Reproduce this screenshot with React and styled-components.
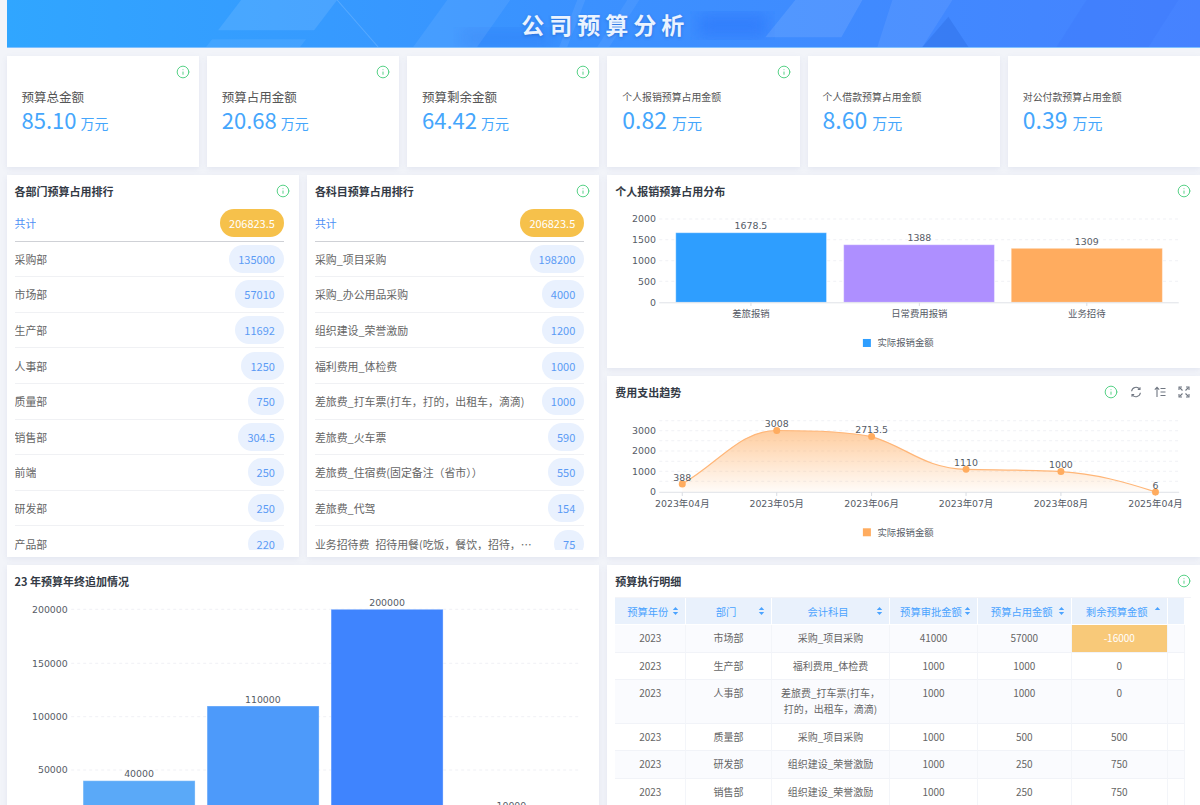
import React from "react";
import styled, { createGlobalStyle } from "styled-components";
import { Info } from "lucide-react";

const GlobalStyle = createGlobalStyle`
  html, body {
    margin: 0;
    height: 805px;
    overflow: hidden;
    background: #f2f4f9;
    font-family: "Noto Sans CJK SC", "Noto Sans", sans-serif;
  }
`;

const Page = styled.div`
  width: 1200px;
  height: 805px;
  overflow: hidden;
  box-sizing: border-box;
  padding-left: 6.5px;
`;

const Banner = styled.header`
  position: relative;
  height: 48px;
  box-sizing: border-box;
  border-bottom: 1px solid #7fc0ff;
  background: linear-gradient(90deg, #30a6ff 0%, #3a92ff 45%, #4682ff 100%);
  display: flex;
  align-items: center;
  justify-content: center;
  overflow: hidden;
`;

const BannerArt = styled.svg`
  position: absolute;
  inset: 0;
  width: 100%;
  height: 100%;
`;

const BannerTitle = styled.h1`
  position: relative;
  margin: 0 0 0 4px;
  font-size: 23px;
  line-height: 48px;
  font-weight: 700;
  letter-spacing: 5px;
  color: #eaf3ff;
  text-shadow: 0 1px 3px rgba(20, 70, 170, 0.45);
`;

const Board = styled.main`
  display: grid;
  grid-template-columns: repeat(12, 1fr);
  grid-template-rows: 111px 193px 181px 260px;
  gap: 8px;
  padding-top: 8px;
`;

const Card = styled.section`
  background: #fff;
  box-shadow: 0 2px 6px rgba(95, 105, 170, 0.1);
  min-width: 0;
  grid-column: span ${(p) => p.$span || 6};
  grid-row: span ${(p) => p.$rows || 1};
  overflow: hidden;
`;

const CardHead = styled.div`
  height: 33px;
  box-sizing: border-box;
  display: flex;
  align-items: center;
  justify-content: space-between;
  padding: 0 9px 1px 8px;
`;

const CardTitle = styled.h2`
  margin: 0;
  font-size: 11px;
  line-height: 16px;
  font-weight: 700;
  color: #333a45;
`;

const Tools = styled.div`
  display: flex;
  align-items: center;
  gap: 12px;
  padding-right: 1px;
  color: #6f7681;
`;

const InfoMark = styled(Info).attrs({ size: 14, strokeWidth: 1.7 })`
  color: #55d085;
  display: block;
  flex: none;
`;

const KpiCard = styled(Card)`
  padding: 9px 9px 0 15px;
`;

const KpiTop = styled.div`
  height: 14px;
  display: flex;
  justify-content: flex-end;
`;

const KpiLabel = styled.div`
  margin-top: 9px;
  height: 18px;
  font-size: ${(p) => (p.$small ? "9.9px" : "12.5px")};
  line-height: 18px;
  color: #555;
`;

const KpiValue = styled.div`
  font-size: ${(p) => (p.$small ? "23px" : "22px")};
  line-height: 26px;
  color: #45a6fc;
  white-space: nowrap;
`;

const KpiUnit = styled.span`
  font-size: ${(p) => (p.$small ? "15px" : "14px")};
  margin-left: ${(p) => (p.$small ? "5px" : "4px")};
`;

const RankList = styled.ul`
  list-style: none;
  margin: -2px 15px 0 8px;
  padding: 0;
  height: 343.7px;
  overflow: hidden;
`;

const RankRow = styled.li`
  height: 35.6px;
  box-sizing: border-box;
  display: flex;
  align-items: center;
  justify-content: space-between;
  border-bottom: 1px solid ${(p) => (p.$total ? "#cfd1d6" : "#f0f1f4")};
`;

const RankName = styled.span`
  max-width: 217px;
  font-size: 10.9px;
  line-height: 16px;
  color: ${(p) => (p.$total ? "#4d90f5" : "#666")};
  white-space: nowrap;
  overflow: hidden;
  text-overflow: ellipsis;
`;

const RankPill = styled.span`
  flex: none;
  height: 28px;
  padding: 0 9px;
  border-radius: 14px;
  font-size: 11px;
  line-height: 28px;
  color: ${(p) => (p.$total ? "#fff" : "#5b9bf5")};
  background: ${(p) => (p.$total ? "#f6c14b" : "#e9f1fe")};
`;

const ChartSvg = styled.svg`
  display: block;
  width: 100%;
  font-family: "DejaVu Sans", "Noto Sans CJK SC", sans-serif;
  font-size: 9.4px;
  fill: #555b66;
`;

const TableWrap = styled.div`
  margin: -1px 0 0 8px;
  width: 576px;
  border-top: 1px solid #f3f4f8;
`;

const Table = styled.table`
  width: 569.5px;
  table-layout: fixed;
  border-collapse: separate;
  border-spacing: 0;
  font-size: 10px;
`;

const Th = styled.th`
  height: 26px;
  padding: 0 6px 0 8px;
  background: #e9f1fc;
  border-right: 1px solid #fff;
  border-bottom: 1px solid #fff;
  color: #4aa3ff;
  font-size: 10.3px;
  font-weight: 400;
  white-space: nowrap;
`;

const ThInner = styled.div`
  display: flex;
  align-items: center;
`;

const ThLabel = styled.span`
  flex: 1;
  text-align: center;
`;

const Td = styled.td`
  padding: 5px 6px 5.5px;
  text-align: center;
  line-height: 16px;
  vertical-align: top;
  color: ${(p) => (p.$hot ? "#fff" : "#666")};
  background: ${(p) => (p.$hot ? "#f8c979" : p.$odd ? "#fafbfe" : "#fff")};
  border-right: 1px solid #f3f5f9;
  border-bottom: 1px solid #f1f3f8;
`;

const Sorter = ({ active }) => (
  <svg width="7" height="10" viewBox="0 0 7 10" style={{ flex: "none" }}>
    <path d="M3.5 1 6.2 4H.8z" fill="#4aa3ff" />
    {!active && <path d="M3.5 9 6.2 6H.8z" fill="#4aa3ff" />}
  </svg>
);

const SyncIcon = () => (
  <svg width="12" height="12" viewBox="0 0 12 12" fill="none" stroke="#6f7681" strokeWidth="1.1">
    <path d="M1.6 5.2A4.5 4.5 0 0 1 9.6 3" />
    <path d="M10.4 6.8A4.5 4.5 0 0 1 2.4 9" />
    <path d="M10 1.2V3.4H7.8M2 10.8V8.6h2.2" />
  </svg>
);

const SortIcon = () => (
  <svg width="12" height="12" viewBox="0 0 12 12" fill="none" stroke="#6f7681" strokeWidth="1.1">
    <path d="M3 11V1.5M.8 3.6 3 1.4l2.2 2.2" />
    <path d="M6.5 2.5h5M6.5 6h5M6.5 9.5h5" />
  </svg>
);

const ExpandIcon = () => (
  <svg width="12" height="12" viewBox="0 0 12 12" fill="none" stroke="#6f7681" strokeWidth="1.1">
    <path d="M1 4V1h3M8 1h3v3M11 8v3H8M4 11H1V8" />
    <path d="M1.5 1.5 4.5 4.5M10.5 1.5l-3 3M10.5 10.5l-3-3M1.5 10.5l3-3" />
  </svg>
);

const kpis = [
  { label: "预算总金额", value: "85.10", info: true },
  { label: "预算占用金额", value: "20.68", info: true },
  { label: "预算剩余金额", value: "64.42", info: true },
  { label: "个人报销预算占用金额", value: "0.82", info: true, small: true },
  { label: "个人借款预算占用金额", value: "8.60", small: true },
  { label: "对公付款预算占用金额", value: "0.39", small: true },
];

const departments = [
  ["采购部", "135000"],
  ["市场部", "57010"],
  ["生产部", "11692"],
  ["人事部", "1250"],
  ["质量部", "750"],
  ["销售部", "304.5"],
  ["前端", "250"],
  ["研发部", "250"],
  ["产品部", "220"],
];

const subjects = [
  ["采购_项目采购", "198200"],
  ["采购_办公用品采购", "4000"],
  ["组织建设_荣誉激励", "1200"],
  ["福利费用_体检费", "1000"],
  ["差旅费_打车票(打车，打的，出租车，滴滴)", "1000"],
  ["差旅费_火车票", "590"],
  ["差旅费_住宿费(固定备注（省市））", "550"],
  ["差旅费_代驾", "154"],
  ["业务招待费_招待用餐(吃饭，餐饮，招待，宴请)", "75"],
];

const columns = [
  ["预算年份", 71],
  ["部门", 85.5],
  ["会计科目", 118.5],
  ["预算审批金额", 87.5],
  ["预算占用金额", 94],
  ["剩余预算金额", 96],
];

const details = [
  ["2023", "市场部", "采购_项目采购", "41000", "57000", "-16000"],
  ["2023", "生产部", "福利费用_体检费", "1000", "1000", "0"],
  ["2023", "人事部", "差旅费_打车票(打车，打的，出租车，滴滴)", "1000", "1000", "0"],
  ["2023", "质量部", "采购_项目采购", "1000", "500", "500"],
  ["2023", "研发部", "组织建设_荣誉激励", "1000", "250", "750"],
  ["2023", "销售部", "组织建设_荣誉激励", "1000", "250", "750"],
];

const trend = [
  { x: 682.3, y: 484, ly: 481, text: "388" },
  { x: 776.8, y: 430.5, ly: 427, text: "3008" },
  { x: 871.7, y: 436.6, ly: 433.3, text: "2713.5" },
  { x: 966.2, y: 469.3, ly: 466, text: "1110" },
  { x: 1061.1, y: 471.6, ly: 468.3, text: "1000" },
  { x: 1155.7, y: 491.9, ly: 489, text: "6" },
];

const trendMonths = ["2023年04月", "2023年05月", "2023年06月", "2023年07月", "2023年08月", "2025年04月"];

const trendLine =
  "M682.3 484C720 462 740 430.5 776.8 430.5C810 430.5 845 431 871.7 436.6C905 446 925 469 966.2 469.3C1000 470 1035 470 1061.1 471.6C1095 473.5 1125 482 1155.7 491.9";

const Grid = ({ x1, x2, ys }) =>
  ys.map((y) => (
    <line key={y} x1={x1} x2={x2} y1={y} y2={y} stroke="#f0f1f5" strokeWidth="1" strokeDasharray="3 3" />
  ));

const YLabels = ({ x, items }) =>
  items.map(([text, y]) => (
    <text key={text} x={x} y={y + 3.4} textAnchor="end">
      {text}
    </text>
  ));

const Legend = ({ y, color }) => (
  <>
    <rect x="863" y={y - 4} width="8" height="8" fill={color} />
    <text x="877.5" y={y + 3.4}>实际报销金额</text>
  </>
);

const DistributionChart = () => {
  const bars = [
    { x: 675.8, w: 150.8, top: 232.7, color: "#2e9eff", text: "1678.5", cx: 751 },
    { x: 843.8, w: 150.8, top: 244.7, color: "#ae8fff", text: "1388", cx: 919.5 },
    { x: 1011.4, w: 151.2, top: 248.3, color: "#ffac5f", text: "1309", cx: 1087 },
  ];
  const names = ["差旅报销", "日常费用报销", "业务招待"];
  return (
    <ChartSvg viewBox="607 208 593 160" height="160">
      <Grid x1={659.3} x2={1178.6} ys={[219, 239.7, 260.7, 281.3]} />
      <YLabels
        x={656}
        items={[["2000", 219], ["1500", 239.7], ["1000", 260.7], ["500", 281.3], ["0", 302.3]]}
      />
      {bars.map((b, i) => (
        <g key={b.text}>
          <rect x={b.x} y={b.top} width={b.w} height={302.3 - b.top} fill={b.color} stroke="#fff" strokeOpacity="0.35" />
          <text x={b.cx} y={b.top - 3.4} textAnchor="middle">{b.text}</text>
          <line x1={b.cx} x2={b.cx} y1={302.3} y2={306} stroke="#d9dce2" />
          <text x={b.cx} y={317.4} textAnchor="middle">{names[i]}</text>
        </g>
      ))}
      <line x1={659.3} x2={1179} y1={302.8} y2={302.8} stroke="#dfe2e7" />
      <Legend y={343} color="#2e9eff" />
    </ChartSvg>
  );
};

const TrendChart = () => (
  <ChartSvg viewBox="607 409 593 148" height="148">
    <defs>
      <linearGradient id="trendFill" x1="0" y1="0" x2="0" y2="1">
        <stop offset="0" stopColor="#ffac5f" stopOpacity="0.6" />
        <stop offset="1" stopColor="#ffac5f" stopOpacity="0.04" />
      </linearGradient>
    </defs>
    <Grid x1={659.3} x2={1179} ys={[420.7, 430.7, 440.7, 451, 461.3, 471.3, 481.3]} />
    <YLabels x={656} items={[["3000", 430.7], ["2000", 451], ["1000", 471.3], ["0", 491.5]]} />
    <path d={`${trendLine}V492H682.3Z`} fill="url(#trendFill)" />
    <path d={trendLine} fill="none" stroke="#ffb678" strokeWidth="1.2" />
    <line x1={659.3} x2={1179.4} y1={492.3} y2={492.3} stroke="#dfe2e7" />
    {trend.map((p, i) => (
      <g key={p.x}>
        <line x1={p.x} x2={p.x} y1={492.3} y2={496} stroke="#d9dce2" />
        <circle cx={p.x} cy={p.y} r="3.5" fill="#ffac5f" />
        <text x={p.x} y={p.ly} textAnchor="middle">{p.text}</text>
        <text x={p.x} y={506.7} textAnchor="middle">{trendMonths[i]}</text>
      </g>
    ))}
    <Legend y={532.3} color="#ffac5f" />
  </ChartSvg>
);

const YearEndChart = () => {
  const bars = [
    { x: 82.7, top: 780.7, color: "#5aa9f8", text: "40000", cx: 138.7 },
    { x: 206.7, top: 706, color: "#4d9afa", text: "110000", cx: 262.5 },
    { x: 330.7, top: 609.3, color: "#3f84fe", text: "200000", cx: 386.7 },
    { x: 455, top: 812.8, color: "#3572f5", text: "10000", cx: 511 },
  ];
  return (
    <ChartSvg viewBox="7 598 592 227" height="227">
      <Grid x1={70.8} x2={578.6} ys={[609.3, 663.3, 716.7, 770]} />
      <YLabels
        x={67.4}
        items={[["200000", 609.3], ["150000", 663.3], ["100000", 716.7], ["50000", 770]]}
      />
      {bars.map((b) => (
        <g key={b.text}>
          <rect x={b.x} y={b.top} width="112" height={823.5 - b.top} fill={b.color} stroke="#fff" strokeOpacity="0.35" />
          <text x={b.cx} y={b.top - 3.4} textAnchor="middle">{b.text}</text>
        </g>
      ))}
    </ChartSvg>
  );
};

const Rank = ({ title, rows }) => (
  <Card $span={3} $rows={2}>
    <CardHead>
      <CardTitle>{title}</CardTitle>
      <InfoMark />
    </CardHead>
    <RankList>
      <RankRow $total>
        <RankName $total>共计</RankName>
        <RankPill $total>206823.5</RankPill>
      </RankRow>
      {rows.map(([name, value]) => (
        <RankRow key={name}>
          <RankName>{name}</RankName>
          <RankPill>{value}</RankPill>
        </RankRow>
      ))}
    </RankList>
  </Card>
);

export default function App() {
  return (
    <Page>
      <GlobalStyle />
      <Banner>
        <BannerArt viewBox="0 0 1193 48" preserveAspectRatio="none">
          <defs>
            <filter id="soft">
              <feGaussianBlur stdDeviation="8" />
            </filter>
          </defs>
          <rect x="455" y="30" width="90" height="18" fill="#2f7df5" opacity="0.5" filter="url(#soft)" />
          <rect x="690" y="14" width="70" height="24" fill="#2a74fa" opacity="0.6" filter="url(#soft)" />
          <polygon points="234,0 330,0 307,31 211,31" fill="#fff" opacity="0.1" />
          <polygon points="205,40 299,40 293,48 199,48" fill="#fff" opacity="0.07" />
          <polyline points="330,0 371,48" fill="none" stroke="#fff" strokeOpacity="0.16" />
          <polygon points="440,0 503,0 470,48 406,48" fill="#fff" opacity="0.07" />
          <polygon points="570,0 578,0 560,48 552,48" fill="#fff" opacity="0.07" />
          <polygon points="620,0 632,0 602,48 590,48" fill="#fff" opacity="0.06" />
          <polygon points="788,0 855,0 834,38 758,38" fill="#fff" opacity="0.1" />
          <polygon points="885,0 945,0 915,48 870,48" fill="#fff" opacity="0.07" />
          <polygon points="941,17 961,48 915,48" fill="#2a6ce0" opacity="0.4" />
          <polygon points="1079,0 1171,0 1141,48 1049,48" fill="#3a78f8" opacity="0.3" />
        </BannerArt>
        <BannerTitle>公司预算分析</BannerTitle>
      </Banner>
      <Board>
        {kpis.map((k) => (
          <KpiCard key={k.label} $span={2}>
            <KpiTop>{k.info && <InfoMark />}</KpiTop>
            <KpiLabel $small={k.small}>{k.label}</KpiLabel>
            <KpiValue $small={k.small}>
              {k.value}
              <KpiUnit $small={k.small}>万元</KpiUnit>
            </KpiValue>
          </KpiCard>
        ))}

        <Rank title="各部门预算占用排行" rows={departments} />
        <Rank title="各科目预算占用排行" rows={subjects} />

        <Card $span={6}>
          <CardHead>
            <CardTitle>个人报销预算占用分布</CardTitle>
            <InfoMark />
          </CardHead>
          <DistributionChart />
        </Card>

        <Card $span={6}>
          <CardHead>
            <CardTitle>费用支出趋势</CardTitle>
            <Tools>
              <InfoMark />
              <SyncIcon />
              <SortIcon />
              <ExpandIcon />
            </Tools>
          </CardHead>
          <TrendChart />
        </Card>

        <Card $span={6}>
          <CardHead>
            <CardTitle>23 年预算年终追加情况</CardTitle>
          </CardHead>
          <YearEndChart />
        </Card>

        <Card $span={6}>
          <CardHead>
            <CardTitle>预算执行明细</CardTitle>
            <InfoMark />
          </CardHead>
          <TableWrap>
            <Table>
              <colgroup>
                {columns.map(([name, width]) => (
                  <col key={name} width={width} />
                ))}
                <col width="17" />
              </colgroup>
              <thead>
                <tr>
                  {columns.map(([name], i) => (
                    <Th key={name}>
                      <ThInner>
                        <ThLabel>{name}</ThLabel>
                        <Sorter active={i === 5} />
                      </ThInner>
                    </Th>
                  ))}
                  <Th />
                </tr>
              </thead>
              <tbody>
                {details.map((row, r) => (
                  <tr key={row[1]}>
                    {row.map((cell, c) => (
                      <Td key={c} $odd={r % 2 === 0} $hot={r === 0 && c === 5}>
                        {cell}
                      </Td>
                    ))}
                    <Td $odd={r % 2 === 0} />
                  </tr>
                ))}
              </tbody>
            </Table>
          </TableWrap>
        </Card>
      </Board>
    </Page>
  );
}
